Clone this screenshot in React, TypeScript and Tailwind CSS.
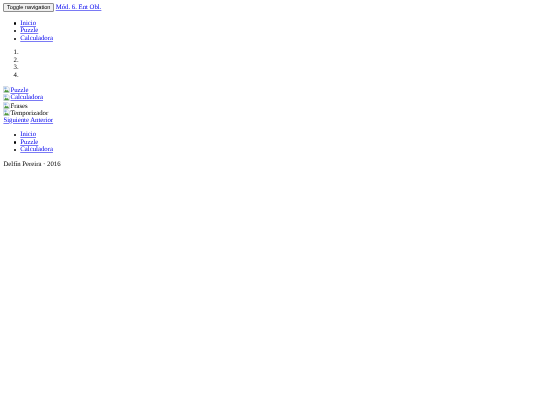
const links = ['Inicio', 'Puzzle', 'Calculadora']
const linkCls = 'text-[#0000ee] underline decoration-[#7a7af5] decoration-[0.5px] underline-offset-[0.8px]'

function Broken() {
  return (
    <svg width="7" height="7" viewBox="0 0 16 16" className="inline-block align-[-1.5px]">
      <path d="M1 1h10l4 4v10H1z" fill="#eef2f8" stroke="#b4bdcc" strokeWidth="1.2" />
      <path d="M2 14l4-6 3 3 2-2 3 5z" fill="#4f9a3c" />
      <path d="M3 3h5v4H3z" fill="#8fb4e8" />
    </svg>
  )
}

function NavList() {
  return (
    <ul className="my-[6.75px] pl-[16.9px]">
      {links.map(l => (
        <li key={l} className="flex items-center">
          <span className="-ml-[6.4px] mr-[4.2px] w-[2.2px] h-[2.2px] rounded-full bg-black" />
          <a href="#" className={linkCls}>{l}</a>
        </li>
      ))}
    </ul>
  )
}

export default function App() {
  return (
    <div className="min-h-screen bg-white text-black px-[3.4px] pt-[3.4px] text-[6.75px] leading-[7.6px] font-['Liberation_Serif',serif] [text-rendering:geometricPrecision] blur-[0.2px]">
      <div className="h-[9.6px]">
        <button className="bg-[#efefef] border-[0.5px] border-[#8f8f8f] rounded-[1px] px-[2.5px] h-[9px] text-[5.6px] leading-none font-['Liberation_Sans',sans-serif] align-middle">
          Toggle navigation
        </button>{' '}
        <a href="#" className={linkCls}>Mód. 6. Ent Obl.</a>
      </div>
      <NavList />
      <ol className="list-decimal my-[6.75px] pl-[16.9px]">
        <li>&nbsp;</li>
        <li>&nbsp;</li>
        <li>&nbsp;</li>
        <li>&nbsp;</li>
      </ol>
      <div>
        <div className="h-[7.6px]"><a href="#" className={linkCls}><Broken />Puzzle</a></div>
        <div className="h-[7.6px]"><a href="#" className={linkCls}><Broken />Calculadora</a></div>
        <div className="h-[7.6px]"><Broken />Frases</div>
        <div className="h-[7.6px]"><Broken />Temporizador</div>
      </div>
      <div>
        <a href="#" className={linkCls}>Siguiente</a>{' '}
        <a href="#" className={linkCls}>Anterior</a>
      </div>
      <NavList />
      <p>Delfín Pereira · 2016</p>
    </div>
  )
}
